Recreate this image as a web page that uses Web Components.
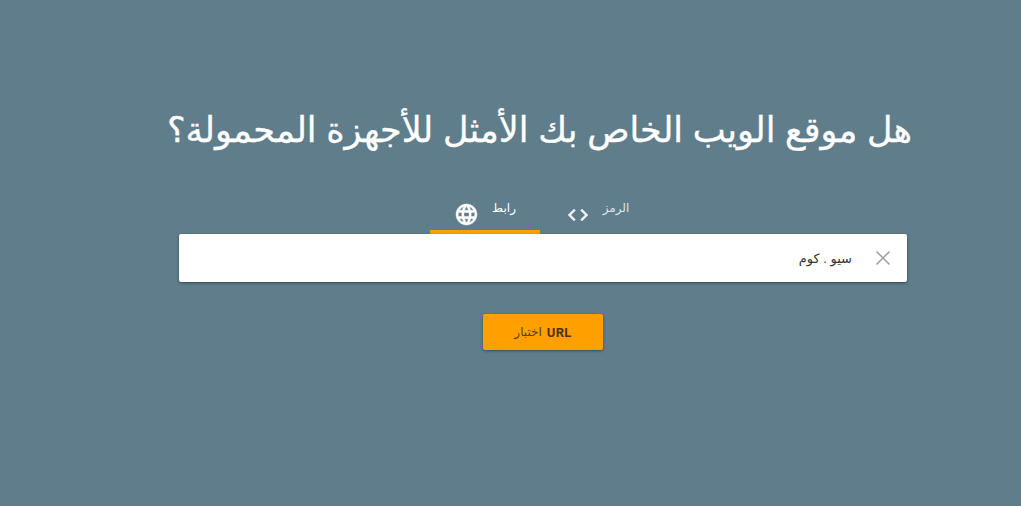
<!DOCTYPE html>
<html lang="ar"><head><meta charset="utf-8">
<style>
html,body{margin:0;padding:0;height:100%;background:#607d8b;overflow:hidden}
body{font-family:"Liberation Sans","DejaVu Sans",sans-serif}
</style></head><body>
<mt-page>
  <mt-title>هل موقع الويب الخاص بك الأمثل للأجهزة المحمولة؟</mt-title>
  <mt-tabs></mt-tabs>
  <mt-field>سيو . كوم</mt-field>
  <mt-button><span>اختبار</span> <b>URL</b></mt-button>
</mt-page>
<script>
function def(name,html){customElements.define(name,class extends HTMLElement{constructor(){super();this.attachShadow({mode:'open'}).innerHTML=html;}});}
def('mt-page',`<style>:host{display:flex;flex-direction:column;align-items:flex-start;padding:108px 0 0 0;box-sizing:border-box;width:1021px;height:506px}</style><slot></slot>`);
def('mt-title',`<style>:host{display:flex;justify-content:center;width:743px;margin:0 0 35px 168px;color:#fff;font-size:35px;line-height:44px;direction:rtl;white-space:nowrap;-webkit-text-stroke:.35px #fff;font-family:"Liberation Sans","DejaVu Sans",sans-serif}</style><slot></slot>`);
def('mt-tab',`<style>:host{display:flex;width:110px;height:47px;box-sizing:border-box;align-items:flex-start;justify-content:center;gap:13px;padding-top:14px;color:#dfe5e8;font-size:12px;line-height:14px;border-bottom:4px solid transparent}
:host([active]){border-bottom-color:#ffa000;color:#fff}
::slotted(svg){margin-top:2px}</style><slot></slot>`);
def('mt-tabs',`<style>:host{display:flex;justify-content:flex-start;margin-left:430px}svg{flex:none}</style>
<mt-tab active><svg style="margin-top:1px" width="25" height="25" viewBox="0 0 24 24" fill="#fff" stroke="#fff" stroke-width=".5"><path d="M11.99 2C6.47 2 2 6.48 2 12s4.47 10 9.99 10C17.52 22 22 17.52 22 12S17.52 2 11.99 2zm6.93 6h-2.95c-.32-1.25-.78-2.45-1.38-3.56 1.84.63 3.37 1.91 4.33 3.56zM12 4.04c.83 1.2 1.48 2.53 1.91 3.96h-3.82c.43-1.43 1.08-2.76 1.91-3.96zM4.26 14C4.1 13.36 4 12.69 4 12s.1-1.36.26-2h3.38c-.08.66-.14 1.32-.14 2 0 .68.06 1.34.14 2H4.26zm.82 2h2.95c.32 1.25.78 2.45 1.38 3.56-1.84-.63-3.37-1.9-4.33-3.56zm2.95-8H5.08c.96-1.66 2.49-2.93 4.33-3.56C8.81 5.55 8.35 6.75 8.03 8zM12 19.96c-.83-1.2-1.48-2.53-1.91-3.96h3.82c-.43 1.43-1.08 2.76-1.91 3.96zM14.34 14H9.66c-.09-.66-.16-1.32-.16-2 0-.68.07-1.35.16-2h4.68c.09.65.16 1.32.16 2 0 .68-.07 1.34-.16 2zm.25 5.56c.6-1.11 1.06-2.31 1.38-3.56h2.95c-.96 1.65-2.49 2.93-4.33 3.56zM16.36 14c.08-.66.14-1.32.14-2 0-.68-.06-1.34-.14-2h3.38c.16.64.26 1.31.26 2s-.1 1.36-.26 2h-3.38z"/></svg><span dir="rtl">رابط</span></mt-tab>
<mt-tab style="padding-left:5px"><svg width="24" height="24" viewBox="0 0 24 24" fill="#eef1f3" stroke="#eef1f3" stroke-width=".5"><path d="M9.4 16.6 4.8 12l4.6-4.6L8 6l-6 6 6 6 1.4-1.4zm5.2 0 4.6-4.6-4.6-4.6L16 6l6 6-6 6-1.4-1.4z"/></svg><span dir="rtl">الرمز</span></mt-tab>`);
def('mt-field',`<style>:host{display:flex;margin-left:179px;width:728px;height:48px;box-sizing:border-box;background:#fff;border-radius:2px;box-shadow:0 1px 3px rgba(0,0,0,.45);align-items:center;justify-content:flex-end;gap:22px;padding-right:17px;color:#333;font-size:13px;margin-bottom:32px}
span{direction:rtl}svg{position:relative;left:1px}</style><span><slot></slot></span><svg width="16" height="16" viewBox="0 0 16 16" fill="none" stroke="#9e9e9e" stroke-width="1.5"><path d="M1.5 1.5l13 13M14.5 1.5l-13 13"/></svg>`);
def('mt-button',`<style>:host{display:flex;width:120px;height:36px;margin-left:483px;background:#ffa000;border-radius:2px;box-shadow:0 1px 3px rgba(0,0,0,.4);align-items:center;justify-content:center;gap:5px;color:#5a3d0a;font-size:12px}
::slotted(b){font-family:Roboto,sans-serif;font-weight:700;font-size:13px;color:#4a3410;letter-spacing:.3px}::slotted(span){direction:rtl}</style><slot></slot>`);
</script></body></html>
